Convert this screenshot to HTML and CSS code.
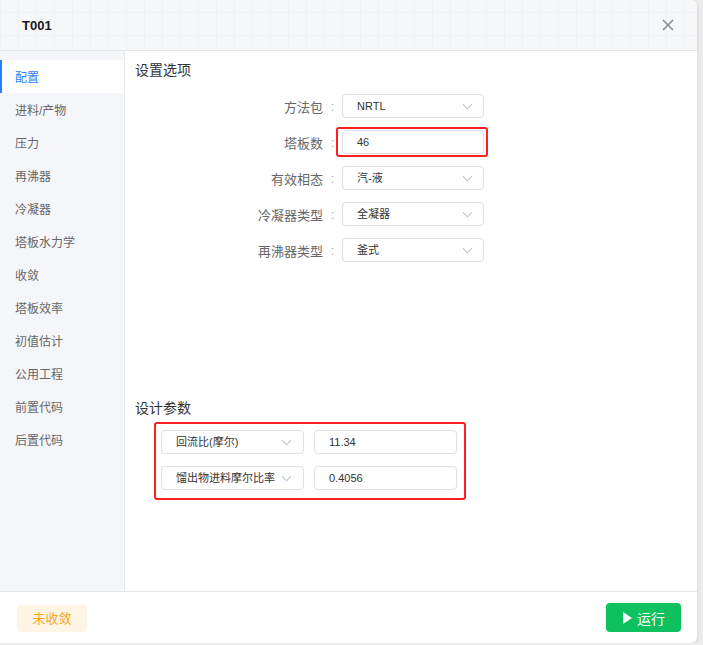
FILE: index.html
```html
<!DOCTYPE html>
<html lang="zh-CN">

<head>
    <meta charset="UTF-8">
    <meta name="viewport" content="width=device-width, initial-scale=1.0">
    <title>T001</title>
    <link rel="stylesheet" href="styles.css">
</head>

<body>

    <div class="dialog">
        <!-- 标题栏 -->
        <div class="dialog-header">
            <span class="dialog-title">T001</span>
            <span class="dialog-close">
                <svg width="12" height="12" viewBox="0 0 12 12">
                    <path d="M1 1 L11 11 M11 1 L1 11" stroke="#8c8c8c" stroke-width="1.6" fill="none" />
                </svg>
            </span>
        </div>

        <div class="dialog-body">
            <!-- 左侧菜单 -->
            <ul class="side-menu">
                <li class="active">配置</li>
                <li>进料/产物</li>
                <li>压力</li>
                <li>再沸器</li>
                <li>冷凝器</li>
                <li>塔板水力学</li>
                <li>收敛</li>
                <li>塔板效率</li>
                <li>初值估计</li>
                <li>公用工程</li>
                <li>前置代码</li>
                <li>后置代码</li>
            </ul>

            <div class="content">
                <!-- 设置选项 -->
                <div class="section">
                    <h3>设置选项</h3>
                    <div class="form-row">
                        <label>方法包</label>
                        <span class="colon">:</span>
                        <div class="select">NRTL<i class="arrow"></i></div>
                    </div>
                    <div class="form-row">
                        <label>塔板数</label>
                        <span class="colon">:</span>
                        <div class="input marked">46</div>
                    </div>
                    <div class="form-row">
                        <label>有效相态</label>
                        <span class="colon">:</span>
                        <div class="select">汽-液<i class="arrow"></i></div>
                    </div>
                    <div class="form-row">
                        <label>冷凝器类型</label>
                        <span class="colon">:</span>
                        <div class="select">全凝器<i class="arrow"></i></div>
                    </div>
                    <div class="form-row">
                        <label>再沸器类型</label>
                        <span class="colon">:</span>
                        <div class="select">釜式<i class="arrow"></i></div>
                    </div>
                </div>

                <!-- 设计参数 -->
                <div class="section params">
                    <h3>设计参数</h3>
                    <div class="param-box">
                        <div class="param-row">
                            <div class="select wide">回流比(摩尔)<i class="arrow"></i></div>
                            <div class="input wide">11.34</div>
                        </div>
                        <div class="param-row">
                            <div class="select wide">馏出物进料摩尔比率<i class="arrow"></i></div>
                            <div class="input wide">0.4056</div>
                        </div>
                    </div>
                </div>
            </div>
        </div>

        <!-- 底部 -->
        <div class="dialog-footer">
            <span class="status-tag">未收敛</span>
            <button class="run-btn">
                <svg width="11" height="14" viewBox="0 0 11 14">
                    <path d="M1 1 L10 7 L1 13 Z" fill="#fff" />
                </svg>
                运行
            </button>
        </div>
    </div>

</body>

</html>
```

FILE: styles.css
```css
body {
    font-family: 'Liberation Sans', 'Noto Sans CJK SC', sans-serif;
    margin: 0;
    padding: 0;
    background-color: #ececec;
    color: #333;
}

.dialog {
    width: 697px;
    height: 643px;
    background-color: #fff;
    border-radius: 0 6px 6px 0;
    box-shadow: 0 1px 4px rgba(0, 0, 0, 0.12);
    display: flex;
    flex-direction: column;
    overflow: hidden;
}

/* 标题栏 */
.dialog-header {
    height: 50px;
    flex-shrink: 0;
    display: flex;
    align-items: center;
    justify-content: space-between;
    padding: 0 22px;
    background-color: #f6f7f9;
    background-image:
        linear-gradient(to right, #f0f1f4 1px, transparent 1px),
        linear-gradient(to bottom, #f0f1f4 1px, transparent 1px);
    background-size: 18px 23px;
    background-position: 0 12px;
    border-bottom: 1px solid #e4e5e9;
}

.dialog-title {
    font-size: 13px;
    font-weight: bold;
    color: #1a1a1a;
}

.dialog-close {
    display: flex;
    margin-right: 1px;
    margin-top: -1px;
}

.dialog-body {
    flex: 1;
    display: flex;
    min-height: 0;
}

/* 左侧菜单 */
.side-menu {
    list-style: none;
    margin: 0;
    padding: 9px 0 0;
    width: 124px;
    flex-shrink: 0;
    background-color: #f5f6fa;
    border-right: 1px solid #e6e7eb;
}

.side-menu li {
    height: 33px;
    line-height: 36px;
    padding-left: 15px;
    font-size: 12px;
    color: #666;
}

.side-menu li.active {
    background-color: #fff;
    color: #2b7ef5;
    box-shadow: inset 2px 0 0 #2b7ef5;
}

/* 内容区 */
.content {
    flex: 1;
    padding: 0 10px;
    display: flex;
    flex-direction: column;
}

.section h3 {
    margin: 0;
    font-size: 14px;
    font-weight: normal;
    color: #333;
    line-height: 20px;
}

.section:first-child h3 {
    margin-top: 9px;
    margin-bottom: 14px;
}

.form-row {
    display: flex;
    align-items: center;
    height: 24px;
    margin-bottom: 12px;
}

.form-row label {
    width: 188px;
    text-align: right;
    font-size: 13px;
    color: #666;
}

.colon {
    width: 19px;
    text-align: center;
    font-size: 13px;
    color: #aaa;
}

.select,
.input {
    position: relative;
    box-sizing: border-box;
    width: 142px;
    height: 24px;
    line-height: 22px;
    padding-left: 14px;
    border: 1px solid #dcdfe6;
    border-radius: 4px;
    font-size: 11px;
    color: #333;
    background-color: #fff;
}

.select .arrow {
    position: absolute;
    right: 12px;
    top: 6px;
    width: 6px;
    height: 6px;
    border-right: 1px solid #c0c4cc;
    border-bottom: 1px solid #c0c4cc;
    transform: rotate(45deg);
}

/* 红色标注框 */
.input.marked::after {
    content: "";
    position: absolute;
    top: -4px;
    right: -5px;
    bottom: -4px;
    left: -7px;
    border: 2px solid #ff1f1f;
    border-radius: 3px;
}

/* 设计参数 */
.params {
    margin-top: 124px;
}

.params h3 {
    margin-bottom: 4px;
}

.param-box {
    margin-left: 19px;
    width: 312px;
    border: 2px solid #ff1f1f;
    border-radius: 3px;
    padding: 6px 7px 8px 5px;
    box-sizing: border-box;
}

.param-row {
    display: flex;
    gap: 10px;
}

.param-row + .param-row {
    margin-top: 12px;
}

.select.wide,
.input.wide {
    width: 143px;
    padding-left: 14px;
}

.select.wide .arrow {
    right: 13px;
}

/* 底部 */
.dialog-footer {
    height: 51px;
    flex-shrink: 0;
    border-top: 1px solid #e4e5e9;
    display: flex;
    align-items: center;
    justify-content: space-between;
    padding: 0 16px 0 17px;
}

.status-tag {
    width: 70px;
    height: 27px;
    line-height: 27px;
    text-align: center;
    background-color: #fef5e5;
    border-radius: 4px;
    font-size: 13px;
    color: #f7a71f;
    margin-top: 1px;
}

.run-btn {
    width: 75px;
    height: 29px;
    border: none;
    border-radius: 4px;
    background-color: #0dc15f;
    color: #fff;
    font-family: inherit;
    font-size: 14px;
    display: flex;
    align-items: center;
    justify-content: center;
    gap: 4px;
    padding: 0;
    cursor: pointer;
}
```
